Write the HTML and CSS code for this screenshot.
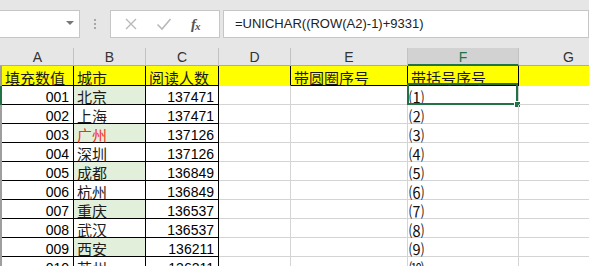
FILE: index.html
```html
<!DOCTYPE html>
<html lang="zh">
<head>
<meta charset="utf-8">
<link rel="stylesheet" href="styles.css">
</head>
<body>
<div class="app">
  <div class="toolbar">
    <div class="namebox"><span class="caret"></span></div>
    <div class="grip"><i></i><i></i><i></i></div>
    <div class="btns">
      <svg class="ico x" width="14" height="14" viewBox="0 0 14 14"><path d="M2 2 L12 12 M12 2 L2 12" stroke="#b9b9b9" stroke-width="1.4" fill="none"/></svg>
      <svg class="ico ok" width="16" height="14" viewBox="0 0 16 14"><path d="M1.5 7.5 L6 12 L14.5 2" stroke="#b9b9b9" stroke-width="1.6" fill="none"/></svg>
      <span class="fx">f<sub>x</sub></span>
    </div>
    <div class="formula">=UNICHAR((ROW(A2)-1)+9331)</div>
  </div>
  <div class="sheet">
    <div class="hd rh"></div>
    <div class="hd">A</div><div class="hd">B</div><div class="hd">C</div><div class="hd">D</div><div class="hd">E</div><div class="hd sel">F</div><div class="hd">G</div>

    <div class="rh"></div>
    <div class="c y bk">填充数值</div><div class="c y bk">城市</div><div class="c y bk">阅读人数</div><div class="c y dk"></div><div class="c y bk">带圆圈序号</div><div class="c y bk">带括号序号</div><div class="c y nb"></div>

    <div class="rh on"></div>
    <div class="c bk num">001</div><div class="c bk g">北京</div><div class="c bk num">137471</div><div class="c"></div><div class="c"></div><div class="c pn active">⑴<span class="selbox"><span class="handle"></span></span></div><div class="c"></div>

    <div class="rh"></div>
    <div class="c bk num">002</div><div class="c bk">上海</div><div class="c bk num">137471</div><div class="c"></div><div class="c"></div><div class="c pn">⑵</div><div class="c"></div>

    <div class="rh"></div>
    <div class="c bk num">003</div><div class="c bk g red">广州</div><div class="c bk num">137126</div><div class="c"></div><div class="c"></div><div class="c pn">⑶</div><div class="c"></div>

    <div class="rh"></div>
    <div class="c bk num">004</div><div class="c bk">深圳</div><div class="c bk num">137126</div><div class="c"></div><div class="c"></div><div class="c pn">⑷</div><div class="c"></div>

    <div class="rh"></div>
    <div class="c bk num">005</div><div class="c bk g">成都</div><div class="c bk num">136849</div><div class="c"></div><div class="c"></div><div class="c pn">⑸</div><div class="c"></div>

    <div class="rh"></div>
    <div class="c bk num">006</div><div class="c bk">杭州</div><div class="c bk num">136849</div><div class="c"></div><div class="c"></div><div class="c pn">⑹</div><div class="c"></div>

    <div class="rh"></div>
    <div class="c bk num">007</div><div class="c bk g">重庆</div><div class="c bk num">136537</div><div class="c"></div><div class="c"></div><div class="c pn">⑺</div><div class="c"></div>

    <div class="rh"></div>
    <div class="c bk num">008</div><div class="c bk">武汉</div><div class="c bk num">136537</div><div class="c"></div><div class="c"></div><div class="c pn">⑻</div><div class="c"></div>

    <div class="rh"></div>
    <div class="c bk num">009</div><div class="c bk g">西安</div><div class="c bk num">136211</div><div class="c"></div><div class="c"></div><div class="c pn">⑼</div><div class="c"></div>

    <div class="rh"></div>
    <div class="c bk num">010</div><div class="c bk">苏州</div><div class="c bk num">136211</div><div class="c"></div><div class="c"></div><div class="c pn">⑽</div><div class="c"></div>
  </div>
</div>
</body>
</html>
```

FILE: styles.css
```css
html, body {
  margin: 0;
  padding: 0;
  overflow: hidden;
  background: #ffffff;
}
.app {
  width: 589px;
  height: 266px;
  overflow: hidden;
  font-family: "Liberation Sans", "Noto Sans CJK SC", sans-serif;
}
.toolbar {
  height: 48px;
  background: #e6e6e6;
  display: flex;
  align-items: flex-start;
  padding-top: 10px;
  box-sizing: border-box;
}
.namebox {
  margin-left: -1px;
  width: 81px;
  height: 28px;
  box-sizing: border-box;
  background: #fff;
  border: 1px solid #c6c6c6;
  position: relative;
}
.caret {
  position: absolute;
  left: 66px;
  top: 10px;
  width: 0;
  height: 0;
  border-left: 4px solid transparent;
  border-right: 4px solid transparent;
  border-top: 4px solid #777;
}
.grip {
  width: 30px;
  height: 28px;
  display: flex;
  flex-direction: column;
  align-items: center;
  justify-content: center;
  gap: 2px;
}
.grip i {
  display: block;
  width: 2px;
  height: 2px;
  background: #a6a6a6;
}
.btns {
  width: 110px;
  height: 28px;
  box-sizing: border-box;
  background: #fff;
  border: 1px solid #c6c6c6;
  display: flex;
  align-items: center;
  position: relative;
}
.ico.x { margin-left: 13px; }
.ico.ok { margin-left: 18px; }
.fx {
  margin-left: 19px;
  font-family: "Liberation Serif", serif;
  font-style: italic;
  font-size: 15px;
  color: #555;
  line-height: 1;
  font-weight: bold;
}
.fx sub {
  font-size: 11px;
  vertical-align: -1px;
  margin-left: -1px;
}
.formula {
  margin-left: 3px;
  width: 366px;
  height: 28px;
  box-sizing: border-box;
  background: #fff;
  border: 1px solid #c6c6c6;
  padding-left: 11px;
  font-size: 13px;
  line-height: 26px;
  color: #222;
  white-space: nowrap;
}
.sheet {
  display: grid;
  grid-template-columns: 2px 72px 72px 73px 72px 117px 111px 100px;
  grid-template-rows: 18px 20px repeat(10, 19px);
}
.hd {
  background: #e6e6e6;
  border-right: 1px solid #c3c3c3;
  border-bottom: 1px solid #ababab;
  font-size: 14px;
  line-height: 15px;
  padding-top: 2px;
  text-align: center;
  color: #333;
}
.hd.rh {
  border-right: none;
  background: #e6e6e6;
  padding: 0;
}
.hd.sel {
  background: #d2d2d2;
  color: #217346;
  border-bottom: 2px solid #217346;
  line-height: 14px;
}
.rh {
  background: #9e9e9e;
}
.rh.on {
  background: #217346;
}
.c {
  position: relative;
  border-right: 1px solid #d4d4d4;
  border-bottom: 1px solid #d4d4d4;
  display: flex;
  align-items: flex-end;
  padding: 0 2px 0 3px;
  font-size: 14px;
  line-height: 14px;
  color: #000;
  white-space: nowrap;
}
.c.bk {
  border-right-color: #000;
  border-bottom-color: #000;
  font-family: "Noto Sans CJK SC", sans-serif;
  font-size: 15px;
  color: #1b1b1b;
}
.c.num {
  justify-content: flex-end;
  font-family: "Liberation Sans", sans-serif;
  font-size: 14px;
  padding-right: 4px;
  color: #000;
}
.c.y {
  background: #ffff00;
}
.c.dk {
  border-right-color: #000;
  border-bottom-color: #ffff00;
}
.c.nb {
  border-right-color: #ffff00;
  border-bottom-color: #ffff00;
}
.c.g {
  background: #e2efda;
}
.c.red {
  color: #f0301e;
}
.c.pn {
  font-family: "Noto Sans CJK SC", sans-serif;
  font-size: 15px;
  padding-left: 1px;
  color: #111;
}
.selbox {
  position: absolute;
  left: -1px;
  top: -3px;
  right: 0;
  bottom: -1px;
  border: 2px solid #217346;
}
.handle {
  position: absolute;
  right: -5px;
  bottom: -5px;
  width: 5px;
  height: 5px;
  background: #217346;
  border: 1px solid #fff;
}
```
